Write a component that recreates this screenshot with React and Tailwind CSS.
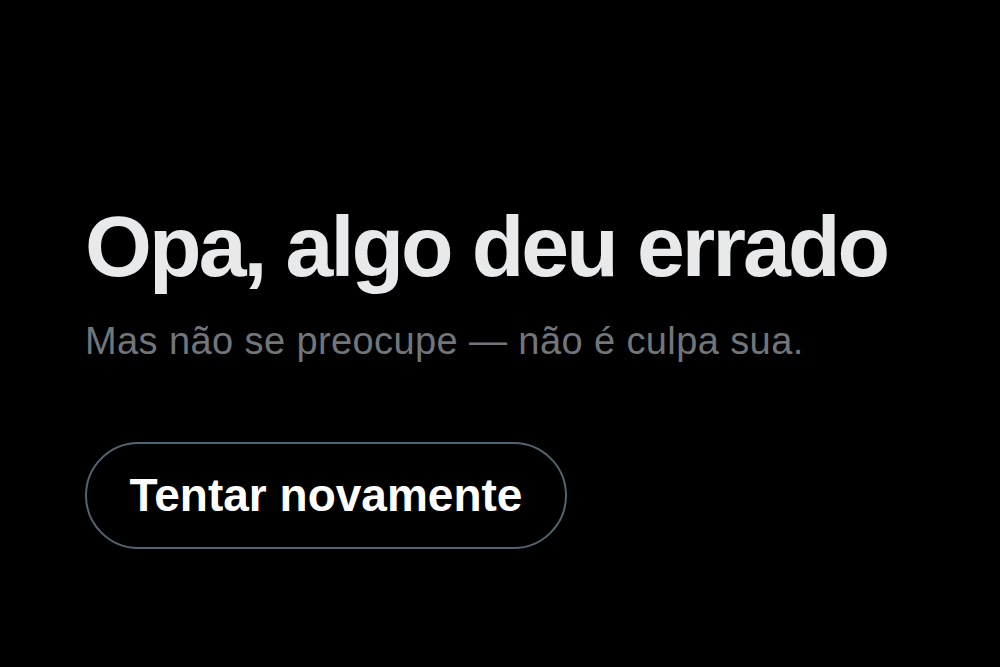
export default function App() {
  return (
    <div
      className="min-h-screen w-full bg-black text-[#e7e9ea] px-[85px] pt-[196px]"
      style={{ fontFamily: '"Liberation Sans", Arial, sans-serif' }}
    >
      <h1 className="whitespace-nowrap text-[86px] font-bold leading-[100px] tracking-[-2.9px]">Opa, algo deu errado</h1>
      <p className="mt-[23px] whitespace-nowrap text-[38px] leading-[44px] tracking-[0.4px] text-[#71767b]">
        Mas não se preocupe — não é culpa sua.
      </p>
      <button className="mt-[79px] h-[107px] w-[482px] rounded-full border-2 border-[#536471] text-[46px] font-bold text-white">
        Tentar novamente
      </button>
    </div>
  );
}
